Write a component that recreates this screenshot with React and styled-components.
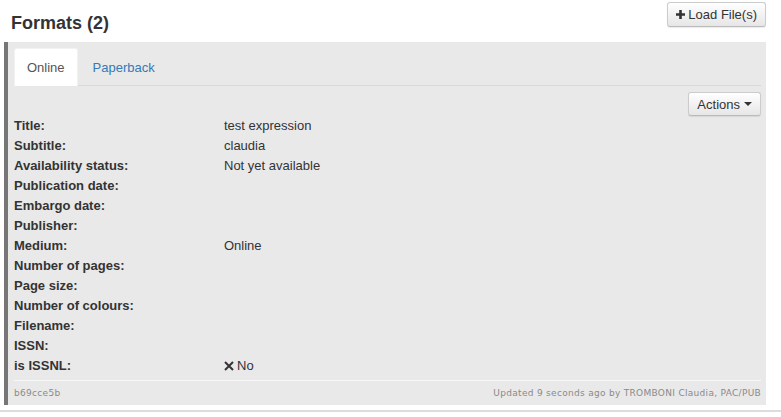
import React from 'react'
import styled, { createGlobalStyle } from 'styled-components'

const GlobalStyle = createGlobalStyle`
  body {
    margin: 0;
    background: #fff;
    font-family: 'Liberation Sans', Arial, sans-serif;
    font-size: 13px;
    color: #333;
  }
`

const Page = styled.div`
  width: 781px;
  height: 417px;
  box-sizing: border-box;
  padding: 2px 15px 0 4px;
  overflow: hidden;
`

const Header = styled.div`
  display: flex;
  justify-content: space-between;
  align-items: flex-start;
  height: 40px;
`

const Title = styled.h2`
  margin: 10px 0 0 7px;
  font-size: 18px;
  line-height: 22px;
  font-weight: bold;
  color: #333;
`

const Button = styled.button`
  display: inline-flex;
  align-items: center;
  gap: ${({ $gap }) => $gap || 4}px;
  height: ${({ $h }) => $h}px;
  padding: 0 ${({ $px }) => $px}px;
  font-family: 'Liberation Sans', Arial, sans-serif;
  font-size: 13px;
  color: #333;
  background: linear-gradient(#ffffff, #e6e6e6);
  border: 1px solid #ccc;
  border-bottom-color: #bbb;
  border-radius: 3px;
  box-shadow: 0 1px 1px rgba(0, 0, 0, 0.08);
  cursor: pointer;
`

const Panel = styled.section`
  border-left: 4px solid #767676;
  background: #e9e9e9;
  padding: 6px 5px 0 6px;
  height: 363px;
  box-sizing: border-box;
`

const Tabs = styled.ul`
  display: flex;
  margin: 0;
  padding: 0;
  list-style: none;
  border-bottom: 1px solid #d9d9d9;
`

const Tab = styled.li`
  margin-right: 2px;
  margin-bottom: -1px;
  padding: 0 12px;
  height: 37px;
  line-height: 37px;
  border: 1px solid transparent;
  border-bottom: none;
  background: ${({ $active }) => ($active ? '#fff' : 'transparent')};
  border-color: ${({ $active }) => ($active ? '#f2f2f2' : 'transparent')};
  color: ${({ $active }) => ($active ? '#555' : '#337ab7')};
  border-radius: 3px 3px 0 0;
  cursor: pointer;
`

const ActionsRow = styled.div`
  display: flex;
  justify-content: flex-end;
  padding: 6px 0 0;
`

const List = styled.dl`
  display: grid;
  grid-template-columns: 210px 1fr;
  margin: 0;
  line-height: 20px;
`

const Label = styled.dt`
  font-weight: bold;
  color: #333;
`

const Value = styled.dd`
  margin: 0;
  color: #333;
  display: flex;
  align-items: center;
  gap: 3px;
`

const Footer = styled.div`
  display: flex;
  justify-content: space-between;
  margin-top: 4px;
  border-top: 1px solid #f7f7f7;
  padding: 6px 0 0;
  font-family: 'DejaVu Sans', Verdana, sans-serif;
  font-size: 9px;
  letter-spacing: 0.3px;
  line-height: 12px;
  color: #8a8a8a;
`

const Rule = styled.div`
  margin: 5px -15px 0 -4px;
  border-top: 2px solid #dcdcdc;
`

const PlusIcon = () => (
  <svg width='9' height='9' viewBox='0 0 9 9'>
    <path d='M4.5 0v9M0 4.5h9' stroke='#333' strokeWidth='2.6' />
  </svg>
)

const Caret = () => (
  <svg width='8' height='4' viewBox='0 0 8 4'>
    <path d='M0 0h8L4 4z' fill='#333' />
  </svg>
)

const CrossIcon = () => (
  <svg width='10' height='10' viewBox='0 0 10 10'>
    <path d='M1 1l8 8M9 1l-8 8' stroke='#333' strokeWidth='2' />
  </svg>
)

const fields = [
  ['Title:', 'test expression'],
  ['Subtitle:', 'claudia'],
  ['Availability status:', 'Not yet available'],
  ['Publication date:', ''],
  ['Embargo date:', ''],
  ['Publisher:', ''],
  ['Medium:', 'Online'],
  ['Number of pages:', ''],
  ['Page size:', ''],
  ['Number of colours:', ''],
  ['Filename:', ''],
  ['ISSN:', ''],
  ['is ISSNL:', 'no']
]

export default function App() {
  return (
    <Page>
      <GlobalStyle />
      <Header>
        <Title>Formats (2)</Title>
        <Button $h={25} $px={8} $gap={3}>
          <PlusIcon />
          Load File(s)
        </Button>
      </Header>

      <Panel>
        <Tabs>
          <Tab $active>Online</Tab>
          <Tab>Paperback</Tab>
        </Tabs>

        <ActionsRow>
          <Button $h={24} $px={8} $gap={4}>
            Actions
            <Caret />
          </Button>
        </ActionsRow>

        <List>
          {fields.map(([label, value]) => (
            <React.Fragment key={label}>
              <Label>{label}</Label>
              <Value>
                {value === 'no' ? (
                  <>
                    <CrossIcon />
                    No
                  </>
                ) : (
                  value
                )}
              </Value>
            </React.Fragment>
          ))}
        </List>

        <Footer>
          <span>b69cce5b</span>
          <span>Updated 9 seconds ago by TROMBONI Claudia, PAC/PUB</span>
        </Footer>
      </Panel>
      <Rule />
    </Page>
  )
}
